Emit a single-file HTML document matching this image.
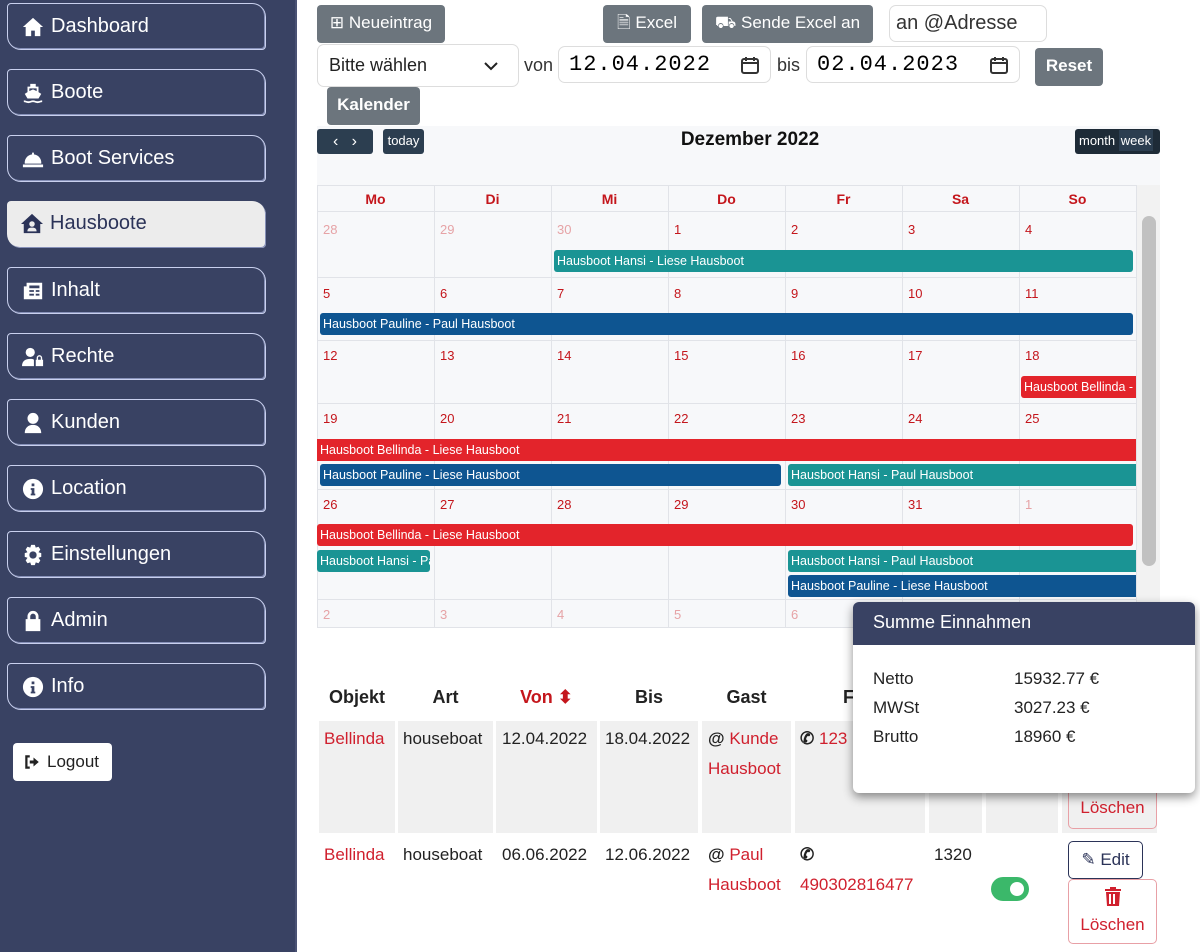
<!DOCTYPE html>
<html><head><meta charset="utf-8"><style>
*{box-sizing:border-box;margin:0;padding:0}
body{width:1200px;height:952px;overflow:hidden;background:#fff;font-family:"Liberation Sans",sans-serif;position:relative}
.a{position:absolute}
#side{left:0;top:0;width:297px;height:952px;background:#394263;border-right:2px solid #4a5274}
.nav{position:absolute;left:7px;width:259px;height:47px;border:1px solid #c9d0ee;border-radius:4px 14px 4px 14px;color:#fff;font-size:20px;line-height:45px;padding-left:14px;box-shadow:inset -1px -1px 0 #8690b8}
.nav.act{background:#ececec;color:#2b3358;border:none}
.nav svg{position:absolute;left:14px;top:12px;width:22px;height:22px;fill:#fff}
.nav.act svg{fill:#2b3358}
.nav b{font-weight:normal;position:absolute;left:43px}
.btn{position:absolute;background:#6c757d;color:#fff;border-radius:4px;font-size:17px;text-align:center}
.inp{position:absolute;border:1px solid #ddd;border-radius:7px;background:#fff}
.mono{font-family:"Liberation Mono",monospace;font-size:22px}
.cal{left:317px;top:126px;width:843px;height:501px;background:#f7f8fa}
.col{position:absolute;top:185px;height:442px;border-left:1px solid #e1e3e8}
.hr{position:absolute;left:317px;width:819px;border-top:1px solid #e1e3e8}
.dn{position:absolute;font-size:13px;color:#c4161c}
.dn.f{color:#e6a3a6}
.dh{position:absolute;top:191px;width:117px;text-align:center;font-weight:bold;font-size:14px;color:#c4161c}
.ev{position:absolute;height:22px;border-radius:3px;color:#fff;font-size:12.5px;line-height:22px;padding-left:3px;white-space:nowrap;overflow:hidden}
.t{background:#1a9494}.b{background:#0e5591}.r{background:#e3242b}
.th{position:absolute;top:687px;font-weight:bold;font-size:18px;color:#222;text-align:center}
.cell{position:absolute;top:721px;height:112px;background:#f0f0f0}
.tx{position:absolute;font-size:17px;color:#222;line-height:30px}
.red{color:#d0202e}
</style></head><body>
<div id="side" class="a">
<div class="nav" style="top:3px"><svg viewBox="0 0 24 24"><path d="M12 2L1 12h3v10h6v-6h4v6h6V12h3z"/></svg><b>Dashboard</b></div>
<div class="nav" style="top:69px"><svg viewBox="0 0 24 24"><path d="M9 2h6v3h3v6l3 2-3 5H6l-3-5 3-2V5h3zM8 7v3l4-2 4 2V7zM2 20c2 0 3 1 5 1s3-1 5-1 3 1 5 1 3-1 5-1v2c-2 0-3 1-5 1s-3-1-5-1-3 1-5 1-3-1-5-1z"/></svg><b>Boote</b></div>
<div class="nav" style="top:135px"><svg viewBox="0 0 24 24"><path d="M11 5h2v2a9 9 0 0 1 8 10H3a9 9 0 0 1 8-10zM1 18h22v3H1z"/></svg><b>Boot Services</b></div>
<div class="nav act" style="top:201px"><svg viewBox="0 0 24 24"><path d="M12 1L0 12h3v10h18V12h3zM12 9a3 3 0 1 1 0 6 3 3 0 0 1 0-6zm-5 11c0-3 2-4 5-4s5 1 5 4z"/></svg><b>Hausboote</b></div>
<div class="nav" style="top:267px"><svg viewBox="0 0 24 24"><path d="M5 3h17v18H2V7h3zm3 3v3h11V6zm0 5v2h5v-2zm7 0v2h4v-2zm-7 4v2h5v-2zm7 0v2h4v-2z"/></svg><b>Inhalt</b></div>
<div class="nav" style="top:333px"><svg viewBox="0 0 24 24"><path d="M9 2a5 5 0 1 1 0 10A5 5 0 0 1 9 2zM0 22c0-6 4-8 9-8 2 0 3 0 4 1v7zM15 15h8v7h-8zm1-2a3 3 0 0 1 6 0v2h-1.5v-2a1.5 1.5 0 0 0-3 0v2H16z"/></svg><b>Rechte</b></div>
<div class="nav" style="top:399px"><svg viewBox="0 0 24 24"><path d="M12 1a6 6 0 1 1 0 12 6 6 0 0 1 0-12zM3 23c0-6 4-9 9-9s9 3 9 9z"/></svg><b>Kunden</b></div>
<div class="nav" style="top:465px"><svg viewBox="0 0 24 24"><path d="M12 1a11 11 0 1 1 0 22 11 11 0 0 1 0-22zm-1.5 5v3h3V6zm-1 5v2h1v4h-1v2h5v-2h-1v-6z"/></svg><b>Location</b></div>
<div class="nav" style="top:531px"><svg viewBox="0 0 24 24"><path d="M10 1h4l1 3 3-1 2 3-2 3 3 1v4l-3 1 2 3-2 3-3-1-1 3h-4l-1-3-3 1-2-3 2-3-3-1v-4l3-1-2-3 2-3 3 1zm2 7a4 4 0 1 0 0 8 4 4 0 0 0 0-8z"/></svg><b>Einstellungen</b></div>
<div class="nav" style="top:597px"><svg viewBox="0 0 24 24"><path d="M6 10V7a6 6 0 0 1 12 0v3h2v13H4V10zm3 0h6V7a3 3 0 0 0-6 0z"/></svg><b>Admin</b></div>
<div class="nav" style="top:663px"><svg viewBox="0 0 24 24"><path d="M12 1a11 11 0 1 1 0 22 11 11 0 0 1 0-22zm-1.5 5v3h3V6zm-1 5v2h1v4h-1v2h5v-2h-1v-6z"/></svg><b>Info</b></div>
<div class="a" style="left:13px;top:743px;width:99px;height:38px;background:#fff;border-radius:4px;font-size:17px;line-height:38px;color:#222;padding-left:34px"><svg class="a" style="left:10px;top:10px" width="18" height="18" viewBox="0 0 24 24"><path d="M9 3H3v18h6v-3H6V6h3zM14 6l7 6-7 6v-4H9v-4h5z" fill="#222"/></svg>Logout</div>
</div>

<div class="btn" style="left:317px;top:5px;width:128px;height:38px;line-height:36px">⊞ Neueintrag</div>
<div class="btn" style="left:603px;top:5px;width:88px;height:38px;line-height:36px">🗎 Excel</div>
<div class="btn" style="left:702px;top:5px;width:171px;height:38px;line-height:36px">⛟ Sende Excel an</div>
<div class="inp" style="left:889px;top:5px;width:158px;height:37px;font-size:20px;line-height:35px;padding-left:6px;color:#333">an @Adresse</div>
<div class="inp" style="left:317px;top:44px;width:202px;height:43px;font-size:18px;line-height:41px;padding-left:11px;color:#222">Bitte wählen<svg class="a" style="right:20px;top:16px" width="14" height="10" viewBox="0 0 14 10"><path d="M1 2l6 6 6-6" stroke="#222" stroke-width="2" fill="none"/></svg></div>
<div class="a" style="left:524px;top:55px;font-size:18px;color:#333">von</div>
<div class="inp mono" style="left:558px;top:46px;width:213px;height:37px;line-height:35px;padding-left:10px;letter-spacing:1px">12.04.2022<svg class="a" style="right:10px;top:8px" width="20" height="20" viewBox="0 0 20 20"><rect x="2" y="4" width="16" height="14" rx="2" stroke="#333" stroke-width="2" fill="none"/><path d="M2 8h16M6 2v4M14 2v4" stroke="#333" stroke-width="2"/></svg></div>
<div class="a" style="left:777px;top:55px;font-size:18px;color:#333">bis</div>
<div class="inp mono" style="left:806px;top:46px;width:214px;height:37px;line-height:35px;padding-left:10px;letter-spacing:1px">02.04.2023<svg class="a" style="right:10px;top:8px" width="20" height="20" viewBox="0 0 20 20"><rect x="2" y="4" width="16" height="14" rx="2" stroke="#333" stroke-width="2" fill="none"/><path d="M2 8h16M6 2v4M14 2v4" stroke="#333" stroke-width="2"/></svg></div>
<div class="btn" style="left:1035px;top:48px;width:68px;height:38px;line-height:36px;font-weight:bold">Reset</div>
<div class="btn" style="left:327px;top:87px;width:93px;height:38px;line-height:36px;font-weight:bold">Kalender</div>

<div class="a cal"></div>
<div class="a" style="left:317px;top:129px;width:56px;height:25px;background:#2c3e50;border-radius:3px;color:#fff;font-size:16px;line-height:25px;text-align:center">‹&nbsp;&nbsp;&nbsp;›</div>
<div class="a" style="left:383px;top:129px;width:41px;height:25px;background:#2c3e50;border-radius:3px;color:#fff;font-size:13px;line-height:23px;text-align:center">today</div>
<div class="a" style="left:600px;top:129px;width:300px;text-align:center;font-weight:bold;font-size:19px;color:#111">Dezember 2022</div>
<div class="a" style="left:1075px;top:129px;width:85px;height:25px;background:#1e2b37;border-radius:3px;color:#fff;font-size:13px;line-height:23px;padding-left:4px">month <span style="background:#2c3e50;padding:3px 2px">week</span></div>

<div class="a" style="left:1136px;top:185px;width:24px;height:442px;background:#f2f2f2"></div>
<div class="a" style="left:1142px;top:216px;width:14px;height:350px;background:#c1c1c1;border-radius:7px"></div>
<div class="col" style="left:317px"></div><div class="col" style="left:434px"></div><div class="col" style="left:551px"></div><div class="col" style="left:668px"></div><div class="col" style="left:785px"></div><div class="col" style="left:902px"></div><div class="col" style="left:1019px"></div><div class="col" style="left:1136px"></div>
<div class="hr" style="top:185px"></div><div class="hr" style="top:211px"></div><div class="hr" style="top:277px"></div><div class="hr" style="top:340px"></div><div class="hr" style="top:403px"></div><div class="hr" style="top:489px"></div><div class="hr" style="top:599px"></div><div class="hr" style="top:627px"></div>
<div class="dh" style="left:317px">Mo</div><div class="dh" style="left:434px">Di</div><div class="dh" style="left:551px">Mi</div><div class="dh" style="left:668px">Do</div><div class="dh" style="left:785px">Fr</div><div class="dh" style="left:902px">Sa</div><div class="dh" style="left:1019px">So</div>

<div class="dn f" style="left:323px;top:222px">28</div><div class="dn f" style="left:440px;top:222px">29</div><div class="dn f" style="left:557px;top:222px">30</div><div class="dn" style="left:674px;top:222px">1</div><div class="dn" style="left:791px;top:222px">2</div><div class="dn" style="left:908px;top:222px">3</div><div class="dn" style="left:1025px;top:222px">4</div>
<div class="dn" style="left:323px;top:286px">5</div><div class="dn" style="left:440px;top:286px">6</div><div class="dn" style="left:557px;top:286px">7</div><div class="dn" style="left:674px;top:286px">8</div><div class="dn" style="left:791px;top:286px">9</div><div class="dn" style="left:908px;top:286px">10</div><div class="dn" style="left:1025px;top:286px">11</div>
<div class="dn" style="left:323px;top:348px">12</div><div class="dn" style="left:440px;top:348px">13</div><div class="dn" style="left:557px;top:348px">14</div><div class="dn" style="left:674px;top:348px">15</div><div class="dn" style="left:791px;top:348px">16</div><div class="dn" style="left:908px;top:348px">17</div><div class="dn" style="left:1025px;top:348px">18</div>
<div class="dn" style="left:323px;top:411px">19</div><div class="dn" style="left:440px;top:411px">20</div><div class="dn" style="left:557px;top:411px">21</div><div class="dn" style="left:674px;top:411px">22</div><div class="dn" style="left:791px;top:411px">23</div><div class="dn" style="left:908px;top:411px">24</div><div class="dn" style="left:1025px;top:411px">25</div>
<div class="dn" style="left:323px;top:497px">26</div><div class="dn" style="left:440px;top:497px">27</div><div class="dn" style="left:557px;top:497px">28</div><div class="dn" style="left:674px;top:497px">29</div><div class="dn" style="left:791px;top:497px">30</div><div class="dn" style="left:908px;top:497px">31</div><div class="dn f" style="left:1025px;top:497px">1</div>
<div class="dn f" style="left:323px;top:607px">2</div><div class="dn f" style="left:440px;top:607px">3</div><div class="dn f" style="left:557px;top:607px">4</div><div class="dn f" style="left:674px;top:607px">5</div><div class="dn f" style="left:791px;top:607px">6</div>

<div class="ev t" style="left:554px;top:250px;width:579px">Hausboot Hansi - Liese Hausboot</div>
<div class="ev b" style="left:320px;top:313px;width:813px">Hausboot Pauline - Paul Hausboot</div>
<div class="ev r" style="left:1021px;top:376px;width:115px;border-radius:3px 0 0 3px">Hausboot Bellinda - Liese Hausboot</div>
<div class="ev r" style="left:317px;top:439px;width:819px;border-radius:0">Hausboot Bellinda - Liese Hausboot</div>
<div class="ev b" style="left:320px;top:464px;width:461px">Hausboot Pauline - Liese Hausboot</div>
<div class="ev t" style="left:788px;top:464px;width:348px;border-radius:3px 0 0 3px">Hausboot Hansi - Paul Hausboot</div>
<div class="ev r" style="left:317px;top:524px;width:816px">Hausboot Bellinda - Liese Hausboot</div>
<div class="ev t" style="left:317px;top:550px;width:113px">Hausboot Hansi - Paul Hausboot</div>
<div class="ev t" style="left:788px;top:550px;width:348px;border-radius:3px 0 0 3px">Hausboot Hansi - Paul Hausboot</div>
<div class="ev b" style="left:788px;top:575px;width:348px;border-radius:3px 0 0 3px">Hausboot Pauline - Liese Hausboot</div>

<div class="th" style="left:319px;width:76px">Objekt</div>
<div class="th" style="left:398px;width:95px">Art</div>
<div class="th" style="left:496px;width:101px;color:#c4161c">Von ⬍</div>
<div class="th" style="left:600px;width:98px">Bis</div>
<div class="th" style="left:702px;width:89px">Gast</div>
<div class="th" style="left:843px">F</div>
<div class="cell" style="left:319px;width:76px"></div><div class="cell" style="left:398px;width:95px"></div><div class="cell" style="left:496px;width:101px"></div><div class="cell" style="left:600px;width:98px"></div><div class="cell" style="left:702px;width:89px"></div><div class="cell" style="left:795px;width:130px"></div><div class="cell" style="left:929px;width:53px"></div><div class="cell" style="left:986px;width:72px"></div><div class="cell" style="left:1062px;width:95px"></div>

<div class="tx red" style="left:324px;top:724px">Bellinda</div>
<div class="tx" style="left:403px;top:724px">houseboat</div>
<div class="tx" style="left:502px;top:724px">12.04.2022</div>
<div class="tx" style="left:605px;top:724px">18.04.2022</div>
<div class="tx" style="left:708px;top:724px"><b style="color:#222">@</b> <span class="red">Kunde</span><br><span class="red">Hausboot</span></div>
<div class="tx" style="left:800px;top:724px"><b>✆</b> <span class="red">123</span></div>
<div class="a red" style="left:1068px;top:788px;width:89px;height:41px;border:1px solid #e8a0a6;border-radius:5px;font-size:17px;text-align:center;line-height:38px">Löschen</div>

<div class="tx red" style="left:324px;top:840px">Bellinda</div>
<div class="tx" style="left:403px;top:840px">houseboat</div>
<div class="tx" style="left:502px;top:840px">06.06.2022</div>
<div class="tx" style="left:605px;top:840px">12.06.2022</div>
<div class="tx" style="left:708px;top:840px"><b>@</b> <span class="red">Paul</span><br><span class="red">Hausboot</span></div>
<div class="tx" style="left:800px;top:840px"><b>✆</b><br><span class="red">490302816477</span></div>
<div class="tx" style="left:934px;top:840px">1320</div>
<div class="a" style="left:991px;top:877px;width:38px;height:24px;background:#3bb86a;border-radius:12px"><div class="a" style="right:5px;top:5px;width:14px;height:14px;background:#fff;border-radius:7px"></div></div>
<div class="a" style="left:1068px;top:841px;width:75px;height:38px;border:1px solid #2b3358;border-radius:5px;font-size:17px;text-align:center;line-height:36px;color:#2b3358">✎ Edit</div>
<div class="a red" style="left:1068px;top:879px;width:89px;height:65px;border:1px solid #e8a0a6;border-radius:5px;font-size:17px;text-align:center;line-height:26px;padding-top:32px"><svg class="a" style="left:36px;top:7px" width="16" height="19" viewBox="0 0 16 19"><path d="M5 0h6v2h5v2H0V2h5zM1 5h14l-1 14H2zm3 2v10h2V7zm4 0v10h2V7z" fill="#d0202e"/></svg>Löschen</div>

<div class="a" style="left:853px;top:602px;width:342px;height:191px;background:#fff;border-radius:6px;box-shadow:0 4px 10px rgba(0,0,0,.45);overflow:hidden">
<div style="height:43px;background:#394263;color:#fff;font-size:18px;line-height:40px;padding-left:20px">Summe Einnahmen</div>
<div style="position:absolute;left:20px;top:62px;font-size:17px;line-height:29px;color:#222">Netto<br>MWSt<br>Brutto</div>
<div style="position:absolute;left:161px;top:62px;font-size:17px;line-height:29px;color:#222">15932.77 €<br>3027.23 €<br>18960 €</div>
</div>
</body></html>
